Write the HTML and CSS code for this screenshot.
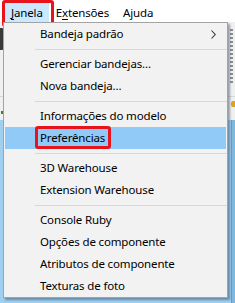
FILE: index.html
```html
<!DOCTYPE html>
<html lang="pt">
<head>
<meta charset="utf-8">
<link rel="stylesheet" href="styles.css">
</head>
<body>
<div class="screen">
  <div class="menubar">
    <span class="mb-item active"><u>J</u>anela</span>
    <span class="mb-item">E<u>x</u>tensões</span>
    <span class="mb-item">Ajuda</span>
  </div>
  <div class="toolbars">
    <div class="tb-row tb-row1">
      <span class="tb-icon"></span>
      <span class="grip"></span>
    </div>
    <div class="tb-row tb-row2">
      <span class="tb-dot"></span>
      <span class="tb-gold"></span>
    </div>
  </div>
  <div class="canvas">
    <span class="canvas-edge"></span>
  </div>

  <div class="mark mark-janela"></div>

  <div class="menu">
    <div class="mi">Bandeja padrão
      <svg class="arrow" width="5" height="9" viewBox="0 0 5 9"><polyline points="0.5,0.5 4.2,4.5 0.5,8.5" fill="none" stroke="#333" stroke-width="1.1"/></svg>
    </div>
    <div class="sep"></div>
    <div class="mi">Gerenciar bandejas...</div>
    <div class="mi">Nova bandeja...</div>
    <div class="sep"></div>
    <div class="mi">Informações do modelo</div>
    <div class="mi hl">Preferências<span class="mark mark-pref"></span></div>
    <div class="sep"></div>
    <div class="mi">3D Warehouse</div>
    <div class="mi">Extension Warehouse</div>
    <div class="sep"></div>
    <div class="mi">Console Ruby</div>
    <div class="mi">Opções de componente</div>
    <div class="mi">Atributos de componente</div>
    <div class="mi">Texturas de foto</div>
  </div>
</div>
</body>
</html>
```

FILE: styles.css
```css
* { box-sizing: border-box; }
html, body { margin: 0; padding: 0; }
body {
  width: 235px;
  height: 303px;
  overflow: hidden;
  font-family: "Noto Sans", "Open Sans", sans-serif;
  font-size: 11.5px;
  letter-spacing: -0.15px;
  color: #000;
  background: #9fd0f2;
}
.screen {
  position: relative;
  width: 235px;
  height: 303px;
  display: flex;
  flex-direction: column;
}
.menubar {
  height: 22px;
  background: #fff;
  display: flex;
  padding: 3px 0 0 4px;
}
.mb-item {
  height: 19px;
  line-height: 19px;
  padding: 0 7px;
}
.mb-item.active {
  background: #cce8ff;
  padding: 0 6px 0 7px;
}
.mb-item u { text-decoration-thickness: 1px; text-underline-offset: 2px; }

.toolbars {
  height: 98px;
  background: #f0f0f0;
  display: flex;
  flex-direction: column;
}
.tb-row {
  position: relative;
  display: flex;
  justify-content: space-between;
}
.tb-row1 { height: 75px; border-bottom: 1px solid #d8d8d8; }
.tb-row2 { flex: 1; }
.tb-icon {
  width: 4px;
  height: 22px;
  margin-top: 6px;
  background: #3a3a3a;
  border-radius: 0 2px 2px 0;
}
.grip {
  width: 3px;
  height: 56px;
  margin-top: 7px;
  margin-right: 2px;
  background: repeating-linear-gradient(#8d8d8d 0 2px, #f0f0f0 2px 4px);
}
.tb-dot {
  width: 2px; height: 3px;
  margin-top: 14px; margin-left: 1px;
  background: #4a7a2a;
}
.tb-gold {
  width: 4px; height: 6px;
  margin-top: 4px;
  background: #e0a020;
  border-radius: 2px 0 0 2px;
}
.canvas {
  flex: 1;
  background: #9fd0f2;
  display: flex;
  justify-content: flex-end;
}
.canvas-edge {
  width: 4px;
  background: #7fb8de;
  border-left: 1px solid #6e9cc0;
}

.mark {
  position: absolute;
  border: 3px solid #e8141c;
  border-radius: 3px;
}
.mark-janela { left: 2px; top: 0; width: 52px; height: 27px; }

.menu {
  position: absolute;
  left: 3px;
  top: 22px;
  width: 225px;
  height: 276px;
  background: #f2f2f2;
  border: 1px solid #a3a3a3;
  box-shadow: 2px 2px 2px rgba(40, 60, 80, 0.45);
  display: flex;
  flex-direction: column;
}
.mi {
  position: relative;
  height: 22px;
  line-height: 22px;
  padding-left: 35px;
  margin: 0 1px;
  display: flex;
  align-items: center;
  white-space: nowrap;
}
.mi.hl { background: #91c9f7; }
.arrow { position: absolute; right: 10px; top: 7px; }
.sep {
  height: 8px;
  display: flex;
  align-items: center;
  padding-left: 31px;
}
.sep::before {
  content: "";
  flex: 1;
  height: 1px;
  background: #d7d7d7;
}
.mark-pref { left: 30px; top: -1px; width: 76px; height: 23px; }
```
